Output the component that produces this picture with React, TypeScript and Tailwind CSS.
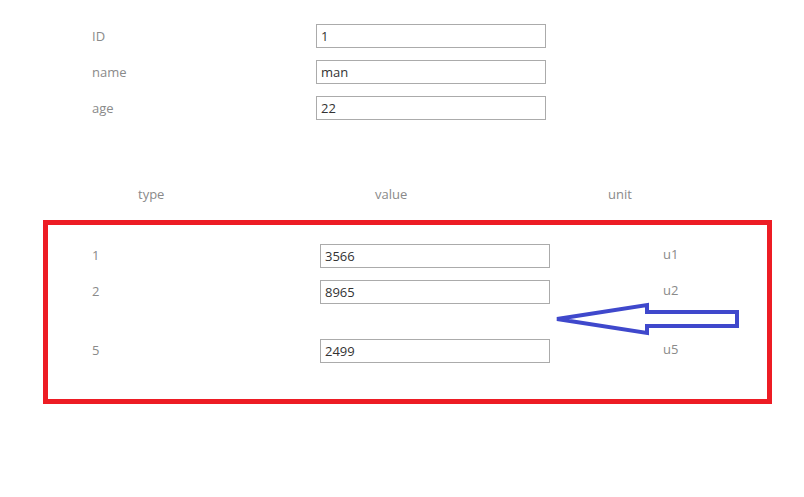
const font = "font-['Open_Sans','Segoe_UI',sans-serif]";

const Field = ({ value }: { value: string }) => (
    <input
        readOnly
        value={value}
        className="w-[230px] h-[24px] border border-[#ababab] px-[4px] text-[13px] text-[#333] outline-none bg-white"
    />
);

const topRows = [
    { label: "ID", value: "1" },
    { label: "name", value: "man" },
    { label: "age", value: "22" },
];

const items = [
    { type: "1", value: "3566", unit: "u1", gap: "mt-0" },
    { type: "2", value: "8965", unit: "u2", gap: "mt-[12px]" },
    { type: "5", value: "2499", unit: "u5", gap: "mt-[35px]" },
];

export default function App() {
    return (
        <div className={`relative w-[804px] h-[497px] bg-white overflow-hidden ${font}`}>
            <div className="pt-[24px] flex flex-col gap-[12px]">
                {topRows.map((r) => (
                    <div key={r.label} className="flex items-center h-[24px]">
                        <span className="w-[316px] pl-[92px] pt-[2px] text-[13px] text-[#8a8a8a]">{r.label}</span>
                        <Field value={r.value} />
                    </div>
                ))}
            </div>

            <div className="flex mt-[66px] h-[18px] items-center text-[13px] text-[#8a8a8a]">
                <span className="w-[375px] pl-[138px]">type</span>
                <span className="w-[233px]">value</span>
                <span>unit</span>
            </div>

            <div className="ml-[43px] mt-[16px] w-[729px] h-[184px] border-[5px] border-[#ed1c24] pt-[19px] pl-[44px]">
                {items.map((it) => (
                    <div key={it.type} className={`flex items-center h-[24px] ${it.gap}`}>
                        <span className="w-[228px] text-[13px] text-[#8a8a8a]">{it.type}</span>
                        <Field value={it.value} />
                        <span className="ml-[113px] text-[13px] text-[#8a8a8a] -mt-[3px]">{it.unit}</span>
                    </div>
                ))}
            </div>

            <svg className="absolute left-0 top-0 pointer-events-none" width="804" height="497">
                <polygon
                    points="557,319 647,305 647,312 737,312 737,326 647,326 647,333"
                    fill="none"
                    stroke="#3f48cc"
                    strokeWidth="4"
                    strokeLinejoin="miter"
                />
            </svg>
        </div>
    );
}
